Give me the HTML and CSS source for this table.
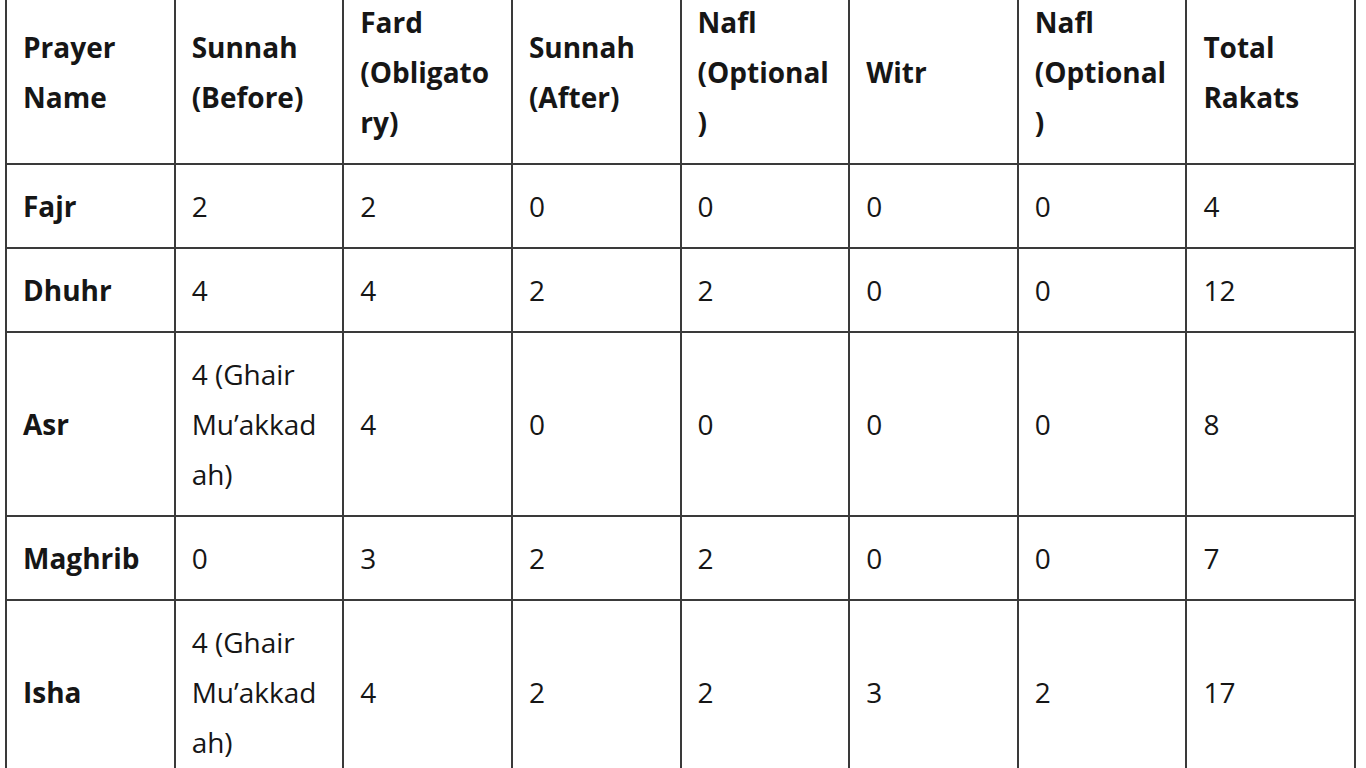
FILE: index.html
```html
<!DOCTYPE html>
<html lang="en">
<head>
<meta charset="utf-8">
<title>Prayer Rakats</title>
<link rel="stylesheet" href="styles.css">
</head>
<body>
<table class="rakats">
  <thead>
    <tr>
      <th>Prayer Name</th>
      <th>Sunnah (Before)</th>
      <th>Fard (Obligatory)</th>
      <th>Sunnah (After)</th>
      <th>Nafl (Optional)</th>
      <th>Witr</th>
      <th>Nafl (Optional)</th>
      <th>Total Rakats</th>
    </tr>
  </thead>
  <tbody>
    <tr><td class="name">Fajr</td><td>2</td><td>2</td><td>0</td><td>0</td><td>0</td><td>0</td><td>4</td></tr>
    <tr><td class="name">Dhuhr</td><td>4</td><td>4</td><td>2</td><td>2</td><td>0</td><td>0</td><td>12</td></tr>
    <tr><td class="name">Asr</td><td>4 (Ghair Mu’akkadah)</td><td>4</td><td>0</td><td>0</td><td>0</td><td>0</td><td>8</td></tr>
    <tr><td class="name">Maghrib</td><td>0</td><td>3</td><td>2</td><td>2</td><td>0</td><td>0</td><td>7</td></tr>
    <tr><td class="name">Isha</td><td>4 (Ghair Mu’akkadah)</td><td>4</td><td>2</td><td>2</td><td>3</td><td>2</td><td>17</td></tr>
  </tbody>
</table>
</body>
</html>
```
FILE: styles.css
```css
html, body {
  margin: 0;
  padding: 0;
  background: #ffffff;
}
body {
  font-family: "Open Sans", "Noto Sans", sans-serif;
  color: #161616;
  overflow: hidden;
}
.rakats {
  margin: -21px 0 0 5px;
  width: 1351px;
  table-layout: fixed;
  border-collapse: collapse;
  font-size: 28px;
  line-height: 50px;
}
.rakats th,
.rakats td {
  border: 2px solid #3a3a3a;
  padding: 16px 16px 16px 16px;
  text-align: left;
  vertical-align: middle;
  overflow-wrap: anywhere;
}
.rakats th,
.rakats td.name {
  font-weight: 700;
}
```
